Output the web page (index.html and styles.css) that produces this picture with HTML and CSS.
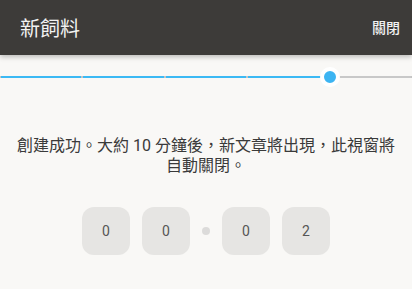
FILE: index.html
```html
<!DOCTYPE html>
<html lang="zh-Hant">
<head>
<meta charset="utf-8">
<title>新飼料</title>
<link rel="stylesheet" href="styles.css">
</head>
<body>
<header class="appbar">
  <h1 class="title">新飼料</h1>
  <button class="close">關閉</button>
</header>
<div class="progress">
  <div class="track">
    <span class="seg done"></span>
    <span class="seg done"></span>
    <span class="seg done"></span>
    <span class="seg done"></span>
    <span class="seg"></span>
  </div>
  <span class="knob" style="left: 80%"></span>
</div>
<p class="message">創建成功。大約 10 分鐘後，新文章將出現，此視窗將自動關閉。</p>
<div class="timer">
  <span class="digit">0</span>
  <span class="digit">0</span>
  <span class="sep"></span>
  <span class="digit">0</span>
  <span class="digit">2</span>
</div>
</body>
</html>
```
FILE: styles.css
```css
html, body {
  margin: 0;
  padding: 0;
}
body {
  background: #f9f8f6;
  font-family: Roboto, "Noto Sans CJK TC", sans-serif;
  color: #3c3c3c;
  width: 412px;
  height: 289px;
  overflow: hidden;
}
.appbar {
  height: 55px;
  background: #3d3b39;
  display: flex;
  align-items: center;
  justify-content: space-between;
  padding: 0 12px 0 20px;
  box-shadow: 0 2px 5px rgba(0, 0, 0, 0.25);
  position: relative;
  z-index: 1;
}
.title {
  margin: 0;
  font-size: 20px;
  font-weight: 400;
  color: #f2f2f2;
  line-height: 1;
  padding-top: 2px;
}
.close {
  background: none;
  border: 0;
  padding: 0;
  font-family: inherit;
  font-size: 14px;
  font-weight: 500;
  color: #f2f2f2;
  line-height: 1;
}
.progress {
  position: relative;
  margin-top: 12px;
  height: 20px;
  display: flex;
  align-items: center;
}
.track {
  display: flex;
  width: 100%;
  height: 2px;
  background: #c4c4c4;
}
.seg {
  flex: 1;
  margin: 0 1px;
  background: #c8c8c8;
}
.seg.done {
  background: #3cb9f4;
}
.knob {
  position: absolute;
  top: 0;
  width: 12px;
  height: 12px;
  margin-left: -10px;
  border: 4px solid #ffffff;
  border-radius: 50%;
  background: #3cb4f2;
}
.message {
  margin: 49px 16px 0;
  font-size: 16px;
  line-height: 20px;
  text-align: center;
  color: #3a3a3a;
}
.timer {
  margin-top: 31px;
  display: flex;
  justify-content: center;
  align-items: center;
  gap: 12px;
}
.digit {
  width: 48px;
  height: 48px;
  border-radius: 12px;
  background: #e6e5e3;
  display: flex;
  align-items: center;
  justify-content: center;
  font-size: 14px;
  color: #555555;
}
.sep {
  width: 8px;
  height: 8px;
  border-radius: 50%;
  background: #dcdbda;
}
```
